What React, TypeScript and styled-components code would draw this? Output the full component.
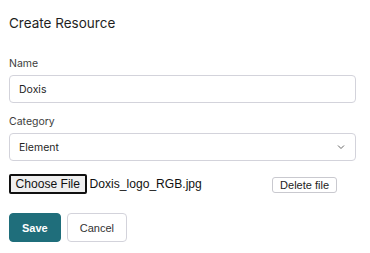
import React from 'react'
import styled, { createGlobalStyle } from 'styled-components'

const GlobalStyle = createGlobalStyle`
    body {
        margin: 0;
        background: #ffffff;
        font-family: Inter, "Noto Sans", sans-serif;
    }
`

const Form = styled.form`
    width: 370px;
    box-sizing: border-box;
    padding: 15px 14px 0 9px;
    display: flex;
    flex-direction: column;
`

const Title = styled.h2`
    margin: 0 0 25px;
    font-size: 13.5px;
    line-height: 17px;
    font-weight: 400;
    color: #1f1f1f;
`

const Field = styled.div`
    display: flex;
    flex-direction: column;
    gap: 5px;
    margin-bottom: 12px;
`

const Label = styled.label`
    font-size: 10.5px;
    line-height: 13px;
    color: #3d3d3d;
`

const Input = styled.input`
    box-sizing: border-box;
    height: 28px;
    width: 100%;
    padding: 0 9px;
    border: 1px solid #d3d3db;
    border-radius: 4px;
    font-family: Inter, sans-serif;
    font-size: 10.5px;
    color: #1f1f1f;
    background: #fff;
    outline: none;
`

const Select = styled.div`
    box-sizing: border-box;
    height: 28px;
    width: 100%;
    padding: 0 9px;
    border: 1px solid #d3d3db;
    border-radius: 4px;
    font-size: 10.5px;
    color: #1f1f1f;
    display: flex;
    align-items: center;
    justify-content: space-between;
`

const FileRow = styled.div`
    display: flex;
    align-items: center;
    margin-top: 1px;
    height: 20px;
    font-family: "Liberation Sans", Arial, sans-serif;
    font-size: 12.1px;
    color: #111;
`

const ChooseButton = styled.button`
    box-sizing: border-box;
    height: 20px;
    padding: 0 4.5px;
    border: 2px solid #101010;
    border-radius: 2px;
    background: #efefef;
    font-family: "Liberation Sans", Arial, sans-serif;
    font-size: 12.1px;
    color: #111;
    margin-right: 3px;
`

const FileName = styled.span`
    flex: 1;
`

const DeleteButton = styled.button`
    box-sizing: border-box;
    height: 16px;
    margin-top: 2px;
    padding: 0 7px;
    border: 1px solid #c9c9cf;
    border-radius: 3px;
    background: #fff;
    font-family: "Liberation Sans", Arial, sans-serif;
    font-size: 11px;
    color: #222;
    margin-right: 19px;
`

const Actions = styled.div`
    display: flex;
    gap: 6px;
    margin-top: 19px;
`

const ActionButton = styled.button<{ $primary?: boolean }>`
    box-sizing: border-box;
    height: 29px;
    padding: 0 12px;
    border-radius: 4px;
    border: 1px solid ${p => (p.$primary ? '#1f6e7b' : '#d3d3db')};
    background: ${p => (p.$primary ? '#1f6e7b' : '#fff')};
    color: ${p => (p.$primary ? '#fff' : '#333')};
    font-family: "Liberation Sans", Arial, sans-serif;
    font-size: 11px;
    font-weight: ${p => (p.$primary ? 700 : 400)};
`

const Chevron = () => (
    <svg width="10" height="10" viewBox="0 0 10 10" fill="none" stroke="#666" strokeWidth="1">
        <path d="M2 3.5 L5 6.5 L8 3.5" />
    </svg>
)

export default function App() {
    return (
        <>
            <GlobalStyle />
            <Form>
                <Title>Create Resource</Title>
                <Field>
                    <Label>Name</Label>
                    <Input defaultValue="Doxis" />
                </Field>
                <Field>
                    <Label>Category</Label>
                    <Select>
                        <span>Element</span>
                        <Chevron />
                    </Select>
                </Field>
                <FileRow>
                    <ChooseButton type="button">Choose File</ChooseButton>
                    <FileName>Doxis_logo_RGB.jpg</FileName>
                    <DeleteButton type="button">Delete file</DeleteButton>
                </FileRow>
                <Actions>
                    <ActionButton type="button" $primary>Save</ActionButton>
                    <ActionButton type="button">Cancel</ActionButton>
                </Actions>
            </Form>
        </>
    )
}
